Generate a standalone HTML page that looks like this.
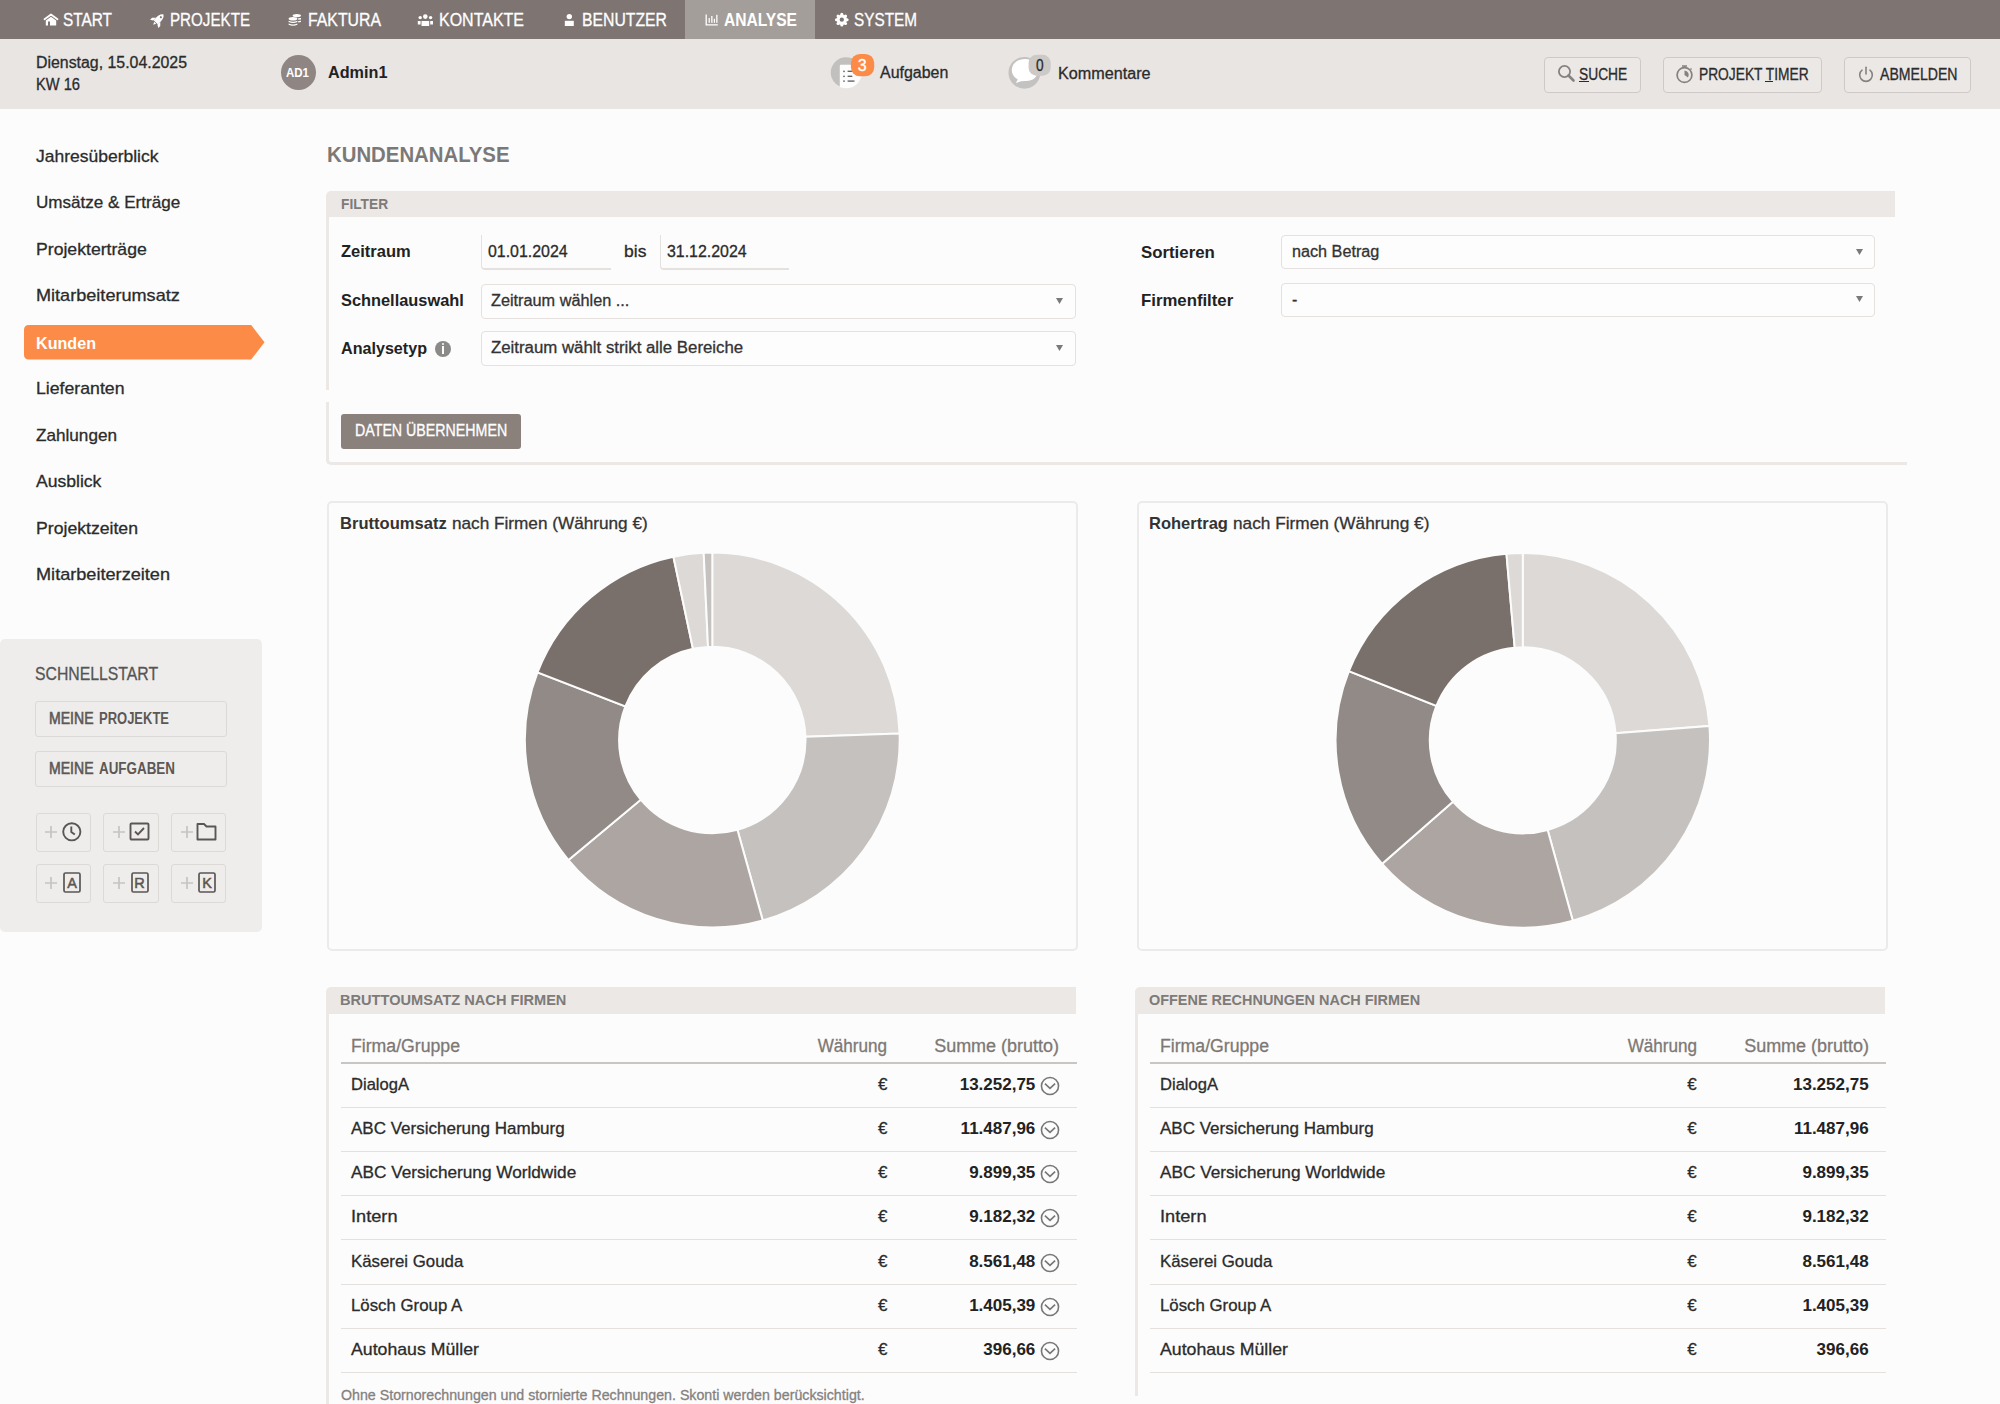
<!DOCTYPE html>
<html><head><meta charset="utf-8"><title>Kundenanalyse</title>
<style>
html,body{margin:0;padding:0;}
body{width:2000px;height:1404px;position:relative;overflow:hidden;background:#fcfcfc;font-family:"Liberation Sans",sans-serif;}
.t{position:absolute;line-height:1;white-space:nowrap;}
.n{-webkit-text-stroke:0.3px currentColor;}
svg{overflow:visible;}
</style></head><body>
<div style="position:absolute;left:0px;top:0px;width:2000px;height:39px;background:#7e7471;"></div>
<div style="position:absolute;left:685px;top:0px;width:130px;height:39px;background:#a39e9a;"></div>
<div class="t n" style="left:63.00px;top:11.06px;font-size:18px;font-weight:normal;color:#ffffff;transform:scaleX(0.8545);transform-origin:0 0;">START</div>
<div class="t n" style="left:170.00px;top:11.06px;font-size:18px;font-weight:normal;color:#ffffff;transform:scaleX(0.8419);transform-origin:0 0;">PROJEKTE</div>
<div class="t n" style="left:308.00px;top:11.06px;font-size:18px;font-weight:normal;color:#ffffff;transform:scaleX(0.8793);transform-origin:0 0;">FAKTURA</div>
<div class="t n" style="left:439.00px;top:11.06px;font-size:18px;font-weight:normal;color:#ffffff;transform:scaleX(0.8884);transform-origin:0 0;">KONTAKTE</div>
<div class="t n" style="left:582.00px;top:11.06px;font-size:18px;font-weight:normal;color:#ffffff;transform:scaleX(0.8762);transform-origin:0 0;">BENUTZER</div>
<div class="t" style="left:724.00px;top:11.06px;font-size:18px;font-weight:bold;color:#ffffff;transform:scaleX(0.8653);transform-origin:0 0;">ANALYSE</div>
<div class="t n" style="left:854.00px;top:11.06px;font-size:18px;font-weight:normal;color:#ffffff;transform:scaleX(0.8512);transform-origin:0 0;">SYSTEM</div>
<svg style="position:absolute;left:43px;top:13px" width="16" height="14" viewBox="0 0 16 14"><path d="M1.5 6.2 L8 1.5 L14.5 6.2" fill="none" stroke="#ffffff" stroke-width="1.8" stroke-linecap="round" stroke-linejoin="round"/><path d="M2.8 7.5 L8 3.8 L13.2 7.5 L13.2 12.5 L7 12.5 L7 8.5 L5 8.5 L5 12.5 L2.8 12.5 Z" fill="#ffffff"/></svg>
<svg style="position:absolute;left:151px;top:13px" width="14" height="14" viewBox="0 0 14 14"><g transform="rotate(45 7 7)"><path d="M7 -0.8 C9.6 1 10 3.8 10 6.5 L10 10.2 L4 10.2 L4 6.5 C4 3.8 4.4 1 7 -0.8 Z M7 1.9 A1.05 1.05 0 1 0 7.01 1.9 Z" fill="#ffffff" fill-rule="evenodd"/><path d="M4 6.8 L1.2 9.6 L1.2 12.4 L4 10.8 Z M10 6.8 L12.8 9.6 L12.8 12.4 L10 10.8 Z M5.6 11 L8.4 11 L7 13.8 Z" fill="#ffffff"/></g></svg>
<svg style="position:absolute;left:288px;top:13px" width="14" height="14" viewBox="0 0 14 14"><ellipse cx="8.8" cy="2.6" rx="4.2" ry="1.6" fill="#ffffff"/><path d="M10.2 5.2 L13 5 L13 6.4 L10.2 6.8 Z M10.2 8 L13 7.8 L13 9 L10.2 9.4 Z" fill="#ffffff"/><ellipse cx="5" cy="5.8" rx="4.4" ry="1.8" fill="#ffffff"/><path d="M0.6 7.8 Q5 9.6 9.4 7.8 L9.4 9 Q5 10.8 0.6 9 Z M0.6 10.6 Q5 12.4 9.4 10.6 L9.4 11.8 Q5 13.6 0.6 11.8 Z" fill="#ffffff"/></svg>
<svg style="position:absolute;left:417px;top:13px" width="17" height="14" viewBox="0 0 17 14"><circle cx="8.3" cy="3.6" r="2.3" fill="#ffffff"/><circle cx="3.2" cy="4.6" r="1.7" fill="#ffffff"/><circle cx="13.6" cy="4.6" r="1.7" fill="#ffffff"/><path d="M4.5 8 L12.2 8 L12.2 13 L4.5 13 Z" fill="#ffffff"/><path d="M0.8 8 L3.6 8 L3.6 11.6 L0.8 11.6 Z M13.2 8 L16 8 L16 11.6 L13.2 11.6 Z" fill="#ffffff"/></svg>
<svg style="position:absolute;left:564px;top:13px" width="11" height="14" viewBox="0 0 11 14"><circle cx="5.3" cy="3.6" r="2.7" fill="#ffffff"/><path d="M0.8 7.8 L9.8 7.8 L9.8 13 L0.8 13 Z" fill="#ffffff"/></svg>
<svg style="position:absolute;left:705px;top:13px" width="14" height="13" viewBox="0 0 14 13"><path d="M1.2 1.5 L1.2 11.8 L12.8 11.8" fill="none" stroke="#ffffff" stroke-width="1.3"/><rect x="3.6" y="5" width="1.2" height="4.8" fill="#ffffff"/><rect x="6.2" y="3" width="1.3" height="6.8" fill="#ffffff"/><rect x="8.8" y="5.8" width="1.2" height="4" fill="#ffffff"/><rect x="11.2" y="1.8" width="1.3" height="8" fill="#ffffff"/></svg>
<svg style="position:absolute;left:835px;top:13px" width="14" height="14" viewBox="0 0 14 14"><circle cx="6.8" cy="6.7" r="5.2" fill="#ffffff"/><circle cx="6.80" cy="1.40" r="1.55" fill="#ffffff"/><circle cx="10.55" cy="2.95" r="1.55" fill="#ffffff"/><circle cx="12.10" cy="6.70" r="1.55" fill="#ffffff"/><circle cx="10.55" cy="10.45" r="1.55" fill="#ffffff"/><circle cx="6.80" cy="12.00" r="1.55" fill="#ffffff"/><circle cx="3.05" cy="10.45" r="1.55" fill="#ffffff"/><circle cx="1.50" cy="6.70" r="1.55" fill="#ffffff"/><circle cx="3.05" cy="2.95" r="1.55" fill="#ffffff"/><circle cx="6.8" cy="6.7" r="2.15" fill="#7e7471"/></svg>
<div style="position:absolute;left:0px;top:39px;width:2000px;height:70px;background:#e8e5e3;"></div>
<div class="t n" style="left:36.00px;top:54.66px;font-size:16px;font-weight:normal;color:#2b2b2b;transform:scaleX(0.9926);transform-origin:0 0;">Dienstag, 15.04.2025</div>
<div class="t n" style="left:36.00px;top:76.66px;font-size:16px;font-weight:normal;color:#2b2b2b;transform:scaleX(0.9164);transform-origin:0 0;">KW 16</div>
<div style="position:absolute;left:280.5px;top:55px;width:35.0px;height:35px;background:#8f8683;border-radius:50%;"></div>
<div class="t" style="left:286.00px;top:66.17px;font-size:13.5px;font-weight:bold;color:#ffffff;transform:scaleX(0.8516);transform-origin:0 0;">AD1</div>
<div class="t" style="left:328.00px;top:64.36px;font-size:17px;font-weight:bold;color:#222222;transform:scaleX(0.9528);transform-origin:0 0;">Admin1</div>
<svg style="position:absolute;left:829px;top:53px" width="48" height="38" viewBox="0 0 48 38"><defs><clipPath id="cpA"><circle cx="17.3" cy="19.6" r="15.6"/></clipPath></defs><circle cx="17.1" cy="19.5" r="15.3" fill="#c2c0be"/><rect x="10.8" y="11.7" width="30" height="30" rx="1.2" fill="#fdfdfd" clip-path="url(#cpA)"/><circle cx="15" cy="18.3" r="0.9" fill="#666"/><circle cx="15" cy="23.3" r="0.9" fill="#666"/><circle cx="15" cy="28.1" r="0.9" fill="#666"/><rect x="18.6" y="17.6" width="5" height="1.4" fill="#666"/><rect x="18.6" y="22.6" width="4.7" height="1.4" fill="#666"/><rect x="18.6" y="27.4" width="6.9" height="1.4" fill="#666"/><rect x="21.9" y="0.9" width="23.3" height="22.4" rx="9" fill="#fb8b47"/></svg>
<div class="t n" style="left:862.10px;top:57.66px;font-size:16px;font-weight:normal;color:#ffffff;transform:translateX(-50%);">3</div>
<div class="t n" style="left:880.00px;top:65.46px;font-size:16px;font-weight:normal;color:#2b2b2b;transform:scaleX(0.9969);transform-origin:0 0;">Aufgaben</div>
<svg style="position:absolute;left:1006px;top:53px" width="48" height="38" viewBox="0 0 48 38"><circle cx="18.4" cy="19.8" r="15.9" fill="#c4c2c0"/><path d="M5.8 17.5 C5.8 10 12 6 19 6 C26 6 31.8 10 31.8 17.5 C31.8 24 27 28 20 28 L15 28.2 L9.8 30 L11.8 26.6 C8 24.5 5.8 21 5.8 17.5 Z" fill="#ffffff"/><rect x="22.6" y="1.8" width="22.1" height="20.9" rx="8" fill="#ccc9c7"/></svg>
<div class="t n" style="left:1035.90px;top:56.83px;font-size:16.5px;font-weight:normal;color:#2b2b2b;transform:scaleX(0.8282);transform-origin:0 0;">0</div>
<div class="t n" style="left:1058.40px;top:65.76px;font-size:16px;font-weight:normal;color:#2b2b2b;transform:scaleX(1.0109);transform-origin:0 0;">Kommentare</div>
<div style="position:absolute;left:1544px;top:57px;width:97px;height:35.5px;box-sizing:border-box;border:1.5px solid #cfcac7;border-radius:4px;background:#ebe8e6;"></div>
<div style="position:absolute;left:1663.2px;top:57px;width:158.79999999999995px;height:35.5px;box-sizing:border-box;border:1.5px solid #cfcac7;border-radius:4px;background:#ebe8e6;"></div>
<div style="position:absolute;left:1844px;top:57px;width:127px;height:35.5px;box-sizing:border-box;border:1.5px solid #cfcac7;border-radius:4px;background:#ebe8e6;"></div>
<div class="t n" style="left:1579.00px;top:66.66px;font-size:16px;font-weight:normal;color:#2b2b2b;transform:scaleX(0.8606);transform-origin:0 0;">SUCHE</div>
<div style="position:absolute;left:1579px;top:80.8px;width:9.5px;height:1.4000000000000057px;background:#2b2b2b;"></div>
<div class="t n" style="left:1699.00px;top:66.66px;font-size:16px;font-weight:normal;color:#2b2b2b;transform:scaleX(0.8601);transform-origin:0 0;">PROJEKT TIMER</div>
<div style="position:absolute;left:1765px;top:80.8px;width:8px;height:1.4000000000000057px;background:#2b2b2b;"></div>
<div class="t n" style="left:1879.50px;top:66.66px;font-size:16px;font-weight:normal;color:#2b2b2b;transform:scaleX(0.8804);transform-origin:0 0;">ABMELDEN</div>
<svg style="position:absolute;left:1557px;top:64.3px" width="20" height="20" viewBox="0 0 20 20"><circle cx="7.5" cy="7.5" r="5.6" fill="none" stroke="#858280" stroke-width="1.8"/><path d="M11.5 11.5 L16.5 16.5" stroke="#858280" stroke-width="2.6" stroke-linecap="round"/></svg>
<svg style="position:absolute;left:1675px;top:63.8px" width="20" height="20" viewBox="0 0 20 20"><circle cx="9.5" cy="11" r="7.4" fill="none" stroke="#858280" stroke-width="1.7"/><path d="M7 2 L12 2 M9.5 2 L9.5 4 M15.5 4.5 L16.5 5.5" stroke="#858280" stroke-width="1.5"/><path d="M9.5 11 L9.5 6.5 A4.5 4.5 0 0 1 13 13.5 Z" fill="#858280"/></svg>
<svg style="position:absolute;left:1857px;top:65.5px" width="18" height="18" viewBox="0 0 18 18"><path d="M5 4.2 A6.3 6.3 0 1 0 13 4.2" fill="none" stroke="#858280" stroke-width="1.6" stroke-linecap="round"/><path d="M9 1.2 L9 8" stroke="#858280" stroke-width="1.6" stroke-linecap="round"/></svg>
<div class="t n" style="left:35.75px;top:147.91px;font-size:17px;font-weight:normal;color:#2b2b2b;transform:scaleX(1.0289);transform-origin:0 0;">Jahresüberblick</div>
<div class="t n" style="left:35.75px;top:194.36px;font-size:17px;font-weight:normal;color:#2b2b2b;transform:scaleX(1.0041);transform-origin:0 0;">Umsätze &amp; Erträge</div>
<div class="t n" style="left:35.75px;top:240.81px;font-size:17px;font-weight:normal;color:#2b2b2b;transform:scaleX(1.0377);transform-origin:0 0;">Projekterträge</div>
<div class="t n" style="left:35.75px;top:287.26px;font-size:17px;font-weight:normal;color:#2b2b2b;transform:scaleX(1.0644);transform-origin:0 0;">Mitarbeiterumsatz</div>
<svg style="position:absolute;left:23.8px;top:325.3px" width="243" height="35" viewBox="0 0 243 35"><path d="M5 0 L227.2 0 L240.5 17.3 L227.2 34.6 L5 34.6 Q0 34.6 0 29.6 L0 5 Q0 0 5 0 Z" fill="#fb8b47"/></svg>
<div class="t" style="left:35.50px;top:334.61px;font-size:17px;font-weight:bold;color:#ffffff;transform:scaleX(0.9483);transform-origin:0 0;">Kunden</div>
<div class="t n" style="left:35.75px;top:380.16px;font-size:17px;font-weight:normal;color:#2b2b2b;transform:scaleX(1.0403);transform-origin:0 0;">Lieferanten</div>
<div class="t n" style="left:35.75px;top:426.61px;font-size:17px;font-weight:normal;color:#2b2b2b;transform:scaleX(1.0081);transform-origin:0 0;">Zahlungen</div>
<div class="t n" style="left:35.75px;top:473.06px;font-size:17px;font-weight:normal;color:#2b2b2b;transform:scaleX(1.0331);transform-origin:0 0;">Ausblick</div>
<div class="t n" style="left:35.75px;top:519.51px;font-size:17px;font-weight:normal;color:#2b2b2b;transform:scaleX(1.0379);transform-origin:0 0;">Projektzeiten</div>
<div class="t n" style="left:35.75px;top:565.96px;font-size:17px;font-weight:normal;color:#2b2b2b;transform:scaleX(1.0663);transform-origin:0 0;">Mitarbeiterzeiten</div>
<div style="position:absolute;left:0px;top:639px;width:262px;height:293px;background:#efedec;border-radius:5px;"></div>
<div class="t n" style="left:35.30px;top:664.76px;font-size:18px;font-weight:normal;color:#555555;transform:scaleX(0.8769);transform-origin:0 0;">SCHNELLSTART</div>
<div style="position:absolute;left:35.3px;top:701px;width:191.5px;height:35.5px;box-sizing:border-box;border:1.5px solid #dcd9d7;border-radius:3px;background:#efedec;"></div>
<div class="t n" style="left:48.50px;top:710.66px;font-size:16px;font-weight:normal;color:#5b5856;transform:scaleX(0.8782);transform-origin:0 0;-webkit-text-stroke:0.6px currentColor;">MEINE</div>
<div class="t" style="left:99.00px;top:710.66px;font-size:16px;font-weight:bold;color:#5b5856;transform:scaleX(0.8116);transform-origin:0 0;">PROJEKTE</div>
<div style="position:absolute;left:35.3px;top:751.3px;width:191.5px;height:35.30000000000007px;box-sizing:border-box;border:1.5px solid #dcd9d7;border-radius:3px;background:#efedec;"></div>
<div class="t n" style="left:48.50px;top:760.66px;font-size:16px;font-weight:normal;color:#5b5856;transform:scaleX(0.8782);transform-origin:0 0;-webkit-text-stroke:0.6px currentColor;">MEINE</div>
<div class="t" style="left:98.50px;top:760.66px;font-size:16px;font-weight:bold;color:#5b5856;transform:scaleX(0.8382);transform-origin:0 0;">AUFGABEN</div>
<div style="position:absolute;left:35.5px;top:813px;width:55.0px;height:38.5px;box-sizing:border-box;border:1.5px solid #dcd9d7;border-radius:3px;background:#efedec;"></div>
<svg style="position:absolute;left:44.2px;top:824.95px" width="14" height="14" viewBox="0 0 14 14"><path d="M7 1 L7 13 M1 7 L13 7" stroke="#c6c3c0" stroke-width="1.7"/></svg>
<div style="position:absolute;left:103px;top:813px;width:55.5px;height:38.5px;box-sizing:border-box;border:1.5px solid #dcd9d7;border-radius:3px;background:#efedec;"></div>
<svg style="position:absolute;left:111.7px;top:824.95px" width="14" height="14" viewBox="0 0 14 14"><path d="M7 1 L7 13 M1 7 L13 7" stroke="#c6c3c0" stroke-width="1.7"/></svg>
<div style="position:absolute;left:171px;top:813px;width:54.5px;height:38.5px;box-sizing:border-box;border:1.5px solid #dcd9d7;border-radius:3px;background:#efedec;"></div>
<svg style="position:absolute;left:179.7px;top:824.95px" width="14" height="14" viewBox="0 0 14 14"><path d="M7 1 L7 13 M1 7 L13 7" stroke="#c6c3c0" stroke-width="1.7"/></svg>
<div style="position:absolute;left:35.5px;top:864px;width:55.0px;height:38.5px;box-sizing:border-box;border:1.5px solid #dcd9d7;border-radius:3px;background:#efedec;"></div>
<svg style="position:absolute;left:44.2px;top:875.95px" width="14" height="14" viewBox="0 0 14 14"><path d="M7 1 L7 13 M1 7 L13 7" stroke="#c6c3c0" stroke-width="1.7"/></svg>
<div style="position:absolute;left:103px;top:864px;width:55.5px;height:38.5px;box-sizing:border-box;border:1.5px solid #dcd9d7;border-radius:3px;background:#efedec;"></div>
<svg style="position:absolute;left:111.7px;top:875.95px" width="14" height="14" viewBox="0 0 14 14"><path d="M7 1 L7 13 M1 7 L13 7" stroke="#c6c3c0" stroke-width="1.7"/></svg>
<div style="position:absolute;left:171px;top:864px;width:54.5px;height:38.5px;box-sizing:border-box;border:1.5px solid #dcd9d7;border-radius:3px;background:#efedec;"></div>
<svg style="position:absolute;left:179.7px;top:875.95px" width="14" height="14" viewBox="0 0 14 14"><path d="M7 1 L7 13 M1 7 L13 7" stroke="#c6c3c0" stroke-width="1.7"/></svg>
<svg style="position:absolute;left:61px;top:821px" width="22" height="22" viewBox="0 0 22 22"><circle cx="10.8" cy="10.8" r="8.6" fill="none" stroke="#5a5655" stroke-width="1.9"/><path d="M10.3 5.5 L10.3 11 L13.8 13.6" fill="none" stroke="#5a5655" stroke-width="1.9"/></svg>
<svg style="position:absolute;left:129px;top:822px" width="22" height="20" viewBox="0 0 22 20"><rect x="1.5" y="1.5" width="18" height="16" rx="1" fill="none" stroke="#5a5655" stroke-width="1.9"/><path d="M6 9.5 L9 12.5 L15 6" fill="none" stroke="#5a5655" stroke-width="1.9"/></svg>
<svg style="position:absolute;left:196px;top:822px" width="22" height="20" viewBox="0 0 22 20"><path d="M1.5 2 L8 2 L10.5 4.5 L19.5 4.5 L19.5 17.5 L1.5 17.5 Z" fill="none" stroke="#5a5655" stroke-width="1.9" stroke-linejoin="round"/></svg>
<svg style="position:absolute;left:63px;top:872px" width="18" height="22" viewBox="0 0 18 22"><rect x="1" y="1" width="16" height="19" rx="1.5" fill="none" stroke="#5a5655" stroke-width="1.7"/></svg>
<div class="t n" style="left:72.00px;top:875.93px;font-size:14.5px;font-weight:normal;color:#5a5655;transform:translateX(-50%);-webkit-text-stroke:0.5px currentColor;">A</div>
<svg style="position:absolute;left:130.5px;top:872px" width="18" height="22" viewBox="0 0 18 22"><rect x="1" y="1" width="16" height="19" rx="1.5" fill="none" stroke="#5a5655" stroke-width="1.7"/></svg>
<div class="t n" style="left:139.50px;top:875.93px;font-size:14.5px;font-weight:normal;color:#5a5655;transform:translateX(-50%);-webkit-text-stroke:0.5px currentColor;">R</div>
<svg style="position:absolute;left:198px;top:872px" width="18" height="22" viewBox="0 0 18 22"><rect x="1" y="1" width="16" height="19" rx="1.5" fill="none" stroke="#5a5655" stroke-width="1.7"/></svg>
<div class="t n" style="left:207.00px;top:875.93px;font-size:14.5px;font-weight:normal;color:#5a5655;transform:translateX(-50%);-webkit-text-stroke:0.5px currentColor;">K</div>
<div class="t" style="left:327.20px;top:143.58px;font-size:22px;font-weight:bold;color:#7b7978;transform:scaleX(0.9253);transform-origin:0 0;">KUNDENANALYSE</div>
<div style="position:absolute;left:326px;top:190.7px;width:1568.6px;height:26.0px;background:#ebe8e6;border-radius:5px 0 0 0;"></div>
<div class="t" style="left:340.70px;top:196.00px;font-size:15px;font-weight:bold;color:#7d7a78;transform:scaleX(0.9167);transform-origin:0 0;">FILTER</div>
<div style="position:absolute;left:326px;top:216.7px;width:3px;height:172.90000000000003px;background:#ebe8e6;"></div>
<div style="position:absolute;left:326px;top:401.5px;width:1581px;height:63.10000000000002px;box-sizing:border-box;border-left:3px solid #ebe8e6;border-bottom:3px solid #ebe8e6;border-radius:0 0 0 5px;"></div>
<div class="t" style="left:341.00px;top:243.31px;font-size:17px;font-weight:bold;color:#222222;transform:scaleX(0.9708);transform-origin:0 0;">Zeitraum</div>
<div class="t" style="left:341.20px;top:292.41px;font-size:17px;font-weight:bold;color:#222222;transform:scaleX(0.9628);transform-origin:0 0;">Schnellauswahl</div>
<div class="t" style="left:341.20px;top:339.81px;font-size:17px;font-weight:bold;color:#222222;transform:scaleX(0.9481);transform-origin:0 0;">Analysetyp</div>
<div style="position:absolute;left:435.2px;top:340.5px;width:16.0px;height:16.0px;background:#8c8a89;border-radius:50%;"></div>
<div style="position:absolute;left:442.0px;top:342.6px;width:2.3999999999999773px;height:2.3999999999999773px;background:#fcfcfc;border-radius:50%;"></div>
<div style="position:absolute;left:442.3px;top:346.3px;width:1.8000000000000114px;height:7.300000000000011px;background:#fcfcfc;"></div>
<div style="position:absolute;left:481px;top:234.6px;width:130px;height:35.599999999999994px;box-sizing:border-box;border-left:1.5px solid #e4e1df;border-bottom:2px solid #e4e1df;border-radius:0 0 0 4px;"></div>
<div style="position:absolute;left:660px;top:234.6px;width:129.39999999999998px;height:35.599999999999994px;box-sizing:border-box;border-left:1.5px solid #e4e1df;border-bottom:2px solid #e4e1df;border-radius:0 0 0 4px;"></div>
<div class="t n" style="left:487.50px;top:244.16px;font-size:16px;font-weight:normal;color:#2b2b2b;transform:scaleX(0.9940);transform-origin:0 0;">01.01.2024</div>
<div class="t n" style="left:624.00px;top:243.31px;font-size:17px;font-weight:normal;color:#2b2b2b;transform:scaleX(1.0307);transform-origin:0 0;">bis</div>
<div class="t n" style="left:666.90px;top:244.16px;font-size:16px;font-weight:normal;color:#2b2b2b;transform:scaleX(0.9940);transform-origin:0 0;">31.12.2024</div>
<div style="position:absolute;left:481px;top:284.2px;width:595.2px;height:35.0px;box-sizing:border-box;border:1.5px solid #e4e1df;border-radius:4px;background:#fdfdfd;"></div>
<div class="t n" style="left:491.00px;top:292.86px;font-size:16px;font-weight:normal;color:#333;transform:scaleX(1.0165);transform-origin:0 0;">Zeitraum wählen ...</div>
<svg style="position:absolute;left:1055.5px;top:297.8px" width="7" height="6" viewBox="0 0 7 6"><path d="M0 0 L7 0 L3.5 6 Z" fill="#7a7a7a"/></svg>
<div style="position:absolute;left:481px;top:331.4px;width:595.2px;height:34.80000000000001px;box-sizing:border-box;border:1.5px solid #e4e1df;border-radius:4px;background:#fdfdfd;"></div>
<div class="t n" style="left:491.00px;top:340.46px;font-size:16px;font-weight:normal;color:#333;transform:scaleX(1.0504);transform-origin:0 0;">Zeitraum wählt strikt alle Bereiche</div>
<svg style="position:absolute;left:1055.5px;top:345.1px" width="7" height="6" viewBox="0 0 7 6"><path d="M0 0 L7 0 L3.5 6 Z" fill="#7a7a7a"/></svg>
<div class="t" style="left:1141.00px;top:243.51px;font-size:17px;font-weight:bold;color:#222222;transform:scaleX(0.9888);transform-origin:0 0;">Sortieren</div>
<div class="t" style="left:1141.00px;top:291.51px;font-size:17px;font-weight:bold;color:#222222;transform:scaleX(0.9859);transform-origin:0 0;">Firmenfilter</div>
<div style="position:absolute;left:1281.2px;top:235.3px;width:593.8px;height:34.099999999999966px;box-sizing:border-box;border:1.5px solid #e4e1df;border-radius:4px;background:#fdfdfd;"></div>
<div class="t n" style="left:1291.50px;top:244.36px;font-size:16px;font-weight:normal;color:#333;transform:scaleX(1.0118);transform-origin:0 0;">nach Betrag</div>
<svg style="position:absolute;left:1855.5px;top:248.8px" width="7" height="6" viewBox="0 0 7 6"><path d="M0 0 L7 0 L3.5 6 Z" fill="#7a7a7a"/></svg>
<div style="position:absolute;left:1281.2px;top:282.5px;width:593.8px;height:34.89999999999998px;box-sizing:border-box;border:1.5px solid #e4e1df;border-radius:4px;background:#fdfdfd;"></div>
<div class="t n" style="left:1292.00px;top:292.36px;font-size:16px;font-weight:normal;color:#333;">-</div>
<svg style="position:absolute;left:1855.5px;top:296.3px" width="7" height="6" viewBox="0 0 7 6"><path d="M0 0 L7 0 L3.5 6 Z" fill="#7a7a7a"/></svg>
<div style="position:absolute;left:341.1px;top:414px;width:179.60000000000002px;height:35.39999999999998px;background:#8b817c;border-radius:3px;"></div>
<div class="t n" style="left:354.80px;top:423.36px;font-size:16px;font-weight:normal;color:#ffffff;transform:scaleX(0.8886);transform-origin:0 0;">DATEN ÜBERNEHMEN</div>
<div style="position:absolute;left:327px;top:500.8px;width:750.8px;height:450.49999999999994px;box-sizing:border-box;border:2px solid #ebebeb;border-radius:5px;"></div>
<div style="position:absolute;left:1137px;top:500.8px;width:750.8px;height:450.49999999999994px;box-sizing:border-box;border:2px solid #ebebeb;border-radius:5px;"></div>
<svg style="position:absolute;left:0;top:0" width="2000" height="1404"><path d="M712.30 552.60 A187.4 187.4 0 0 1 899.59 733.62 L805.45 736.83 A93.2 93.2 0 0 0 712.30 646.80 Z" fill="#dcd9d7" stroke="#fcfcfc" stroke-width="2" stroke-linejoin="miter"/><path d="M899.59 733.62 A187.4 187.4 0 0 1 762.78 920.47 L737.41 829.75 A93.2 93.2 0 0 0 805.45 736.83 Z" fill="#c5c1be" stroke="#fcfcfc" stroke-width="2" stroke-linejoin="miter"/><path d="M762.78 920.47 A187.4 187.4 0 0 1 568.45 860.10 L640.76 799.73 A93.2 93.2 0 0 0 737.41 829.75 Z" fill="#aca5a1" stroke="#fcfcfc" stroke-width="2" stroke-linejoin="miter"/><path d="M568.45 860.10 A187.4 187.4 0 0 1 537.52 672.39 L625.38 706.38 A93.2 93.2 0 0 0 640.76 799.73 Z" fill="#928a86" stroke="#fcfcfc" stroke-width="2" stroke-linejoin="miter"/><path d="M537.52 672.39 A187.4 187.4 0 0 1 673.43 556.68 L692.97 648.83 A93.2 93.2 0 0 0 625.38 706.38 Z" fill="#7a706b" stroke="#fcfcfc" stroke-width="2" stroke-linejoin="miter"/><path d="M673.43 556.68 A187.4 187.4 0 0 1 703.68 552.80 L708.01 646.90 A93.2 93.2 0 0 0 692.97 648.83 Z" fill="#dcd9d7" stroke="#fcfcfc" stroke-width="2" stroke-linejoin="miter"/><path d="M703.68 552.80 A187.4 187.4 0 0 1 712.30 552.60 L712.30 646.80 A93.2 93.2 0 0 0 708.01 646.90 Z" fill="#c5c1be" stroke="#fcfcfc" stroke-width="2" stroke-linejoin="miter"/><path d="M1522.80 553.10 A187.2 187.2 0 0 1 1709.45 725.94 L1615.53 733.17 A93 93 0 0 0 1522.80 647.30 Z" fill="#dcd9d7" stroke="#fcfcfc" stroke-width="2" stroke-linejoin="miter"/><path d="M1709.45 725.94 A187.2 187.2 0 0 1 1572.83 920.69 L1547.65 829.92 A93 93 0 0 0 1615.53 733.17 Z" fill="#c5c1be" stroke="#fcfcfc" stroke-width="2" stroke-linejoin="miter"/><path d="M1572.83 920.69 A187.2 187.2 0 0 1 1382.16 863.85 L1452.93 801.68 A93 93 0 0 0 1547.65 829.92 Z" fill="#aca5a1" stroke="#fcfcfc" stroke-width="2" stroke-linejoin="miter"/><path d="M1382.16 863.85 A187.2 187.2 0 0 1 1348.87 671.08 L1436.39 705.91 A93 93 0 0 0 1452.93 801.68 Z" fill="#928a86" stroke="#fcfcfc" stroke-width="2" stroke-linejoin="miter"/><path d="M1348.87 671.08 A187.2 187.2 0 0 1 1506.48 553.81 L1514.69 647.65 A93 93 0 0 0 1436.39 705.91 Z" fill="#7a706b" stroke="#fcfcfc" stroke-width="2" stroke-linejoin="miter"/><path d="M1506.48 553.81 A187.2 187.2 0 0 1 1522.80 553.10 L1522.80 647.30 A93 93 0 0 0 1514.69 647.65 Z" fill="#dcd9d7" stroke="#fcfcfc" stroke-width="2" stroke-linejoin="miter"/></svg>
<div class="t" style="left:339.60px;top:515.36px;font-size:17px;font-weight:bold;color:#333;transform:scaleX(0.9739);transform-origin:0 0;">Bruttoumsatz</div>
<div class="t n" style="left:452.00px;top:515.36px;font-size:17px;font-weight:normal;color:#333;transform:scaleX(1.0104);transform-origin:0 0;">nach Firmen (Währung €)</div>
<div class="t" style="left:1149.30px;top:515.36px;font-size:17px;font-weight:bold;color:#333;transform:scaleX(0.9713);transform-origin:0 0;">Rohertrag</div>
<div class="t n" style="left:1233.20px;top:515.36px;font-size:17px;font-weight:normal;color:#333;transform:scaleX(1.0140);transform-origin:0 0;">nach Firmen (Währung €)</div>
<div style="position:absolute;left:326px;top:987px;width:750px;height:26.5px;background:#ebe8e6;border-radius:5px 0 0 0;"></div>
<div class="t" style="left:340.00px;top:992.40px;font-size:15px;font-weight:bold;color:#7d7a78;transform:scaleX(0.9727);transform-origin:0 0;">BRUTTOUMSATZ NACH FIRMEN</div>
<div style="position:absolute;left:326px;top:1013.5px;width:3px;height:390.5px;background:#ebe8e6;"></div>
<div class="t n" style="left:351.20px;top:1036.76px;font-size:18px;font-weight:normal;color:#7d7874;transform:scaleX(0.9817);transform-origin:0 0;">Firma/Gruppe</div>
<div class="t n" style="right:1112.50px;top:1036.76px;font-size:18px;font-weight:normal;color:#7d7874;transform:scaleX(0.9488);transform-origin:100% 0;">Währung</div>
<div class="t n" style="right:940.60px;top:1036.76px;font-size:18px;font-weight:normal;color:#7d7874;transform:scaleX(0.9989);transform-origin:100% 0;">Summe (brutto)</div>
<div style="position:absolute;left:341px;top:1062px;width:736px;height:2px;background:#c9c5c2;"></div>
<div class="t n" style="left:351.00px;top:1075.81px;font-size:17px;font-weight:normal;color:#2b2b2b;transform:scaleX(0.9742);transform-origin:0 0;">DialogA</div>
<div class="t n" style="right:1112.50px;top:1075.81px;font-size:17px;font-weight:normal;color:#2b2b2b;">€</div>
<div class="t" style="right:964.70px;top:1075.81px;font-size:17px;font-weight:bold;color:#222;">13.252,75</div>
<svg style="position:absolute;left:1040.3px;top:1075.8px" width="20" height="20" viewBox="0 0 20 20"><circle cx="10" cy="10" r="8.55" fill="none" stroke="#797776" stroke-width="1.6"/><path d="M4.9 7.6 L10 12.4 L15.1 7.6" fill="none" stroke="#797776" stroke-width="1.6"/></svg>
<div style="position:absolute;left:341px;top:1107px;width:736px;height:1px;background:#e3e0de;"></div>
<div class="t n" style="left:351.00px;top:1120.01px;font-size:17px;font-weight:normal;color:#2b2b2b;transform:scaleX(1.0007);transform-origin:0 0;">ABC Versicherung Hamburg</div>
<div class="t n" style="right:1112.50px;top:1120.01px;font-size:17px;font-weight:normal;color:#2b2b2b;">€</div>
<div class="t" style="right:964.70px;top:1120.01px;font-size:17px;font-weight:bold;color:#222;">11.487,96</div>
<svg style="position:absolute;left:1040.3px;top:1120.0px" width="20" height="20" viewBox="0 0 20 20"><circle cx="10" cy="10" r="8.55" fill="none" stroke="#797776" stroke-width="1.6"/><path d="M4.9 7.6 L10 12.4 L15.1 7.6" fill="none" stroke="#797776" stroke-width="1.6"/></svg>
<div style="position:absolute;left:341px;top:1151px;width:736px;height:1px;background:#e3e0de;"></div>
<div class="t n" style="left:351.00px;top:1164.21px;font-size:17px;font-weight:normal;color:#2b2b2b;transform:scaleX(1.0113);transform-origin:0 0;">ABC Versicherung Worldwide</div>
<div class="t n" style="right:1112.50px;top:1164.21px;font-size:17px;font-weight:normal;color:#2b2b2b;">€</div>
<div class="t" style="right:964.70px;top:1164.21px;font-size:17px;font-weight:bold;color:#222;">9.899,35</div>
<svg style="position:absolute;left:1040.3px;top:1164.2px" width="20" height="20" viewBox="0 0 20 20"><circle cx="10" cy="10" r="8.55" fill="none" stroke="#797776" stroke-width="1.6"/><path d="M4.9 7.6 L10 12.4 L15.1 7.6" fill="none" stroke="#797776" stroke-width="1.6"/></svg>
<div style="position:absolute;left:341px;top:1195px;width:736px;height:1px;background:#e3e0de;"></div>
<div class="t n" style="left:351.00px;top:1208.41px;font-size:17px;font-weight:normal;color:#2b2b2b;transform:scaleX(1.0696);transform-origin:0 0;">Intern</div>
<div class="t n" style="right:1112.50px;top:1208.41px;font-size:17px;font-weight:normal;color:#2b2b2b;">€</div>
<div class="t" style="right:964.70px;top:1208.41px;font-size:17px;font-weight:bold;color:#222;">9.182,32</div>
<svg style="position:absolute;left:1040.3px;top:1208.4px" width="20" height="20" viewBox="0 0 20 20"><circle cx="10" cy="10" r="8.55" fill="none" stroke="#797776" stroke-width="1.6"/><path d="M4.9 7.6 L10 12.4 L15.1 7.6" fill="none" stroke="#797776" stroke-width="1.6"/></svg>
<div style="position:absolute;left:341px;top:1239px;width:736px;height:1px;background:#e3e0de;"></div>
<div class="t n" style="left:351.00px;top:1252.61px;font-size:17px;font-weight:normal;color:#2b2b2b;transform:scaleX(0.9902);transform-origin:0 0;">Käserei Gouda</div>
<div class="t n" style="right:1112.50px;top:1252.61px;font-size:17px;font-weight:normal;color:#2b2b2b;">€</div>
<div class="t" style="right:964.70px;top:1252.61px;font-size:17px;font-weight:bold;color:#222;">8.561,48</div>
<svg style="position:absolute;left:1040.3px;top:1252.6px" width="20" height="20" viewBox="0 0 20 20"><circle cx="10" cy="10" r="8.55" fill="none" stroke="#797776" stroke-width="1.6"/><path d="M4.9 7.6 L10 12.4 L15.1 7.6" fill="none" stroke="#797776" stroke-width="1.6"/></svg>
<div style="position:absolute;left:341px;top:1284px;width:736px;height:1px;background:#e3e0de;"></div>
<div class="t n" style="left:351.00px;top:1296.81px;font-size:17px;font-weight:normal;color:#2b2b2b;transform:scaleX(0.9888);transform-origin:0 0;">Lösch Group A</div>
<div class="t n" style="right:1112.50px;top:1296.81px;font-size:17px;font-weight:normal;color:#2b2b2b;">€</div>
<div class="t" style="right:964.70px;top:1296.81px;font-size:17px;font-weight:bold;color:#222;">1.405,39</div>
<svg style="position:absolute;left:1040.3px;top:1296.8px" width="20" height="20" viewBox="0 0 20 20"><circle cx="10" cy="10" r="8.55" fill="none" stroke="#797776" stroke-width="1.6"/><path d="M4.9 7.6 L10 12.4 L15.1 7.6" fill="none" stroke="#797776" stroke-width="1.6"/></svg>
<div style="position:absolute;left:341px;top:1328px;width:736px;height:1px;background:#e3e0de;"></div>
<div class="t n" style="left:351.00px;top:1341.01px;font-size:17px;font-weight:normal;color:#2b2b2b;transform:scaleX(1.0411);transform-origin:0 0;">Autohaus Müller</div>
<div class="t n" style="right:1112.50px;top:1341.01px;font-size:17px;font-weight:normal;color:#2b2b2b;">€</div>
<div class="t" style="right:964.70px;top:1341.01px;font-size:17px;font-weight:bold;color:#222;">396,66</div>
<svg style="position:absolute;left:1040.3px;top:1341.0px" width="20" height="20" viewBox="0 0 20 20"><circle cx="10" cy="10" r="8.55" fill="none" stroke="#797776" stroke-width="1.6"/><path d="M4.9 7.6 L10 12.4 L15.1 7.6" fill="none" stroke="#797776" stroke-width="1.6"/></svg>
<div style="position:absolute;left:341px;top:1372px;width:736px;height:1px;background:#e3e0de;"></div>
<div style="position:absolute;left:1134.7px;top:987px;width:750.5px;height:26.5px;background:#ebe8e6;border-radius:5px 0 0 0;"></div>
<div class="t" style="left:1148.70px;top:992.40px;font-size:15px;font-weight:bold;color:#7d7a78;transform:scaleX(0.9625);transform-origin:0 0;">OFFENE RECHNUNGEN NACH FIRMEN</div>
<div style="position:absolute;left:1134.7px;top:1013.5px;width:3.0px;height:382.5px;background:#ebe8e6;"></div>
<div class="t n" style="left:1159.90px;top:1036.76px;font-size:18px;font-weight:normal;color:#7d7874;transform:scaleX(0.9817);transform-origin:0 0;">Firma/Gruppe</div>
<div class="t n" style="right:303.20px;top:1036.76px;font-size:18px;font-weight:normal;color:#7d7874;transform:scaleX(0.9488);transform-origin:100% 0;">Währung</div>
<div class="t n" style="right:131.20px;top:1036.76px;font-size:18px;font-weight:normal;color:#7d7874;transform:scaleX(0.9989);transform-origin:100% 0;">Summe (brutto)</div>
<div style="position:absolute;left:1149.7px;top:1062px;width:736.3px;height:2px;background:#c9c5c2;"></div>
<div class="t n" style="left:1159.70px;top:1075.81px;font-size:17px;font-weight:normal;color:#2b2b2b;transform:scaleX(0.9742);transform-origin:0 0;">DialogA</div>
<div class="t n" style="right:303.20px;top:1075.81px;font-size:17px;font-weight:normal;color:#2b2b2b;">€</div>
<div class="t" style="right:131.40px;top:1075.81px;font-size:17px;font-weight:bold;color:#222;">13.252,75</div>
<div style="position:absolute;left:1149.7px;top:1107px;width:736.3px;height:1px;background:#e3e0de;"></div>
<div class="t n" style="left:1159.70px;top:1120.01px;font-size:17px;font-weight:normal;color:#2b2b2b;transform:scaleX(1.0007);transform-origin:0 0;">ABC Versicherung Hamburg</div>
<div class="t n" style="right:303.20px;top:1120.01px;font-size:17px;font-weight:normal;color:#2b2b2b;">€</div>
<div class="t" style="right:131.40px;top:1120.01px;font-size:17px;font-weight:bold;color:#222;">11.487,96</div>
<div style="position:absolute;left:1149.7px;top:1151px;width:736.3px;height:1px;background:#e3e0de;"></div>
<div class="t n" style="left:1159.70px;top:1164.21px;font-size:17px;font-weight:normal;color:#2b2b2b;transform:scaleX(1.0113);transform-origin:0 0;">ABC Versicherung Worldwide</div>
<div class="t n" style="right:303.20px;top:1164.21px;font-size:17px;font-weight:normal;color:#2b2b2b;">€</div>
<div class="t" style="right:131.40px;top:1164.21px;font-size:17px;font-weight:bold;color:#222;">9.899,35</div>
<div style="position:absolute;left:1149.7px;top:1195px;width:736.3px;height:1px;background:#e3e0de;"></div>
<div class="t n" style="left:1159.70px;top:1208.41px;font-size:17px;font-weight:normal;color:#2b2b2b;transform:scaleX(1.0696);transform-origin:0 0;">Intern</div>
<div class="t n" style="right:303.20px;top:1208.41px;font-size:17px;font-weight:normal;color:#2b2b2b;">€</div>
<div class="t" style="right:131.40px;top:1208.41px;font-size:17px;font-weight:bold;color:#222;">9.182,32</div>
<div style="position:absolute;left:1149.7px;top:1239px;width:736.3px;height:1px;background:#e3e0de;"></div>
<div class="t n" style="left:1159.70px;top:1252.61px;font-size:17px;font-weight:normal;color:#2b2b2b;transform:scaleX(0.9902);transform-origin:0 0;">Käserei Gouda</div>
<div class="t n" style="right:303.20px;top:1252.61px;font-size:17px;font-weight:normal;color:#2b2b2b;">€</div>
<div class="t" style="right:131.40px;top:1252.61px;font-size:17px;font-weight:bold;color:#222;">8.561,48</div>
<div style="position:absolute;left:1149.7px;top:1284px;width:736.3px;height:1px;background:#e3e0de;"></div>
<div class="t n" style="left:1159.70px;top:1296.81px;font-size:17px;font-weight:normal;color:#2b2b2b;transform:scaleX(0.9888);transform-origin:0 0;">Lösch Group A</div>
<div class="t n" style="right:303.20px;top:1296.81px;font-size:17px;font-weight:normal;color:#2b2b2b;">€</div>
<div class="t" style="right:131.40px;top:1296.81px;font-size:17px;font-weight:bold;color:#222;">1.405,39</div>
<div style="position:absolute;left:1149.7px;top:1328px;width:736.3px;height:1px;background:#e3e0de;"></div>
<div class="t n" style="left:1159.70px;top:1341.01px;font-size:17px;font-weight:normal;color:#2b2b2b;transform:scaleX(1.0411);transform-origin:0 0;">Autohaus Müller</div>
<div class="t n" style="right:303.20px;top:1341.01px;font-size:17px;font-weight:normal;color:#2b2b2b;">€</div>
<div class="t" style="right:131.40px;top:1341.01px;font-size:17px;font-weight:bold;color:#222;">396,66</div>
<div style="position:absolute;left:1149.7px;top:1372px;width:736.3px;height:1px;background:#e3e0de;"></div>
<div class="t n" style="left:341.20px;top:1387.65px;font-size:14px;font-weight:normal;color:#858180;transform:scaleX(1.0149);transform-origin:0 0;">Ohne Stornorechnungen und stornierte Rechnungen. Skonti werden berücksichtigt.</div>

</body></html>
